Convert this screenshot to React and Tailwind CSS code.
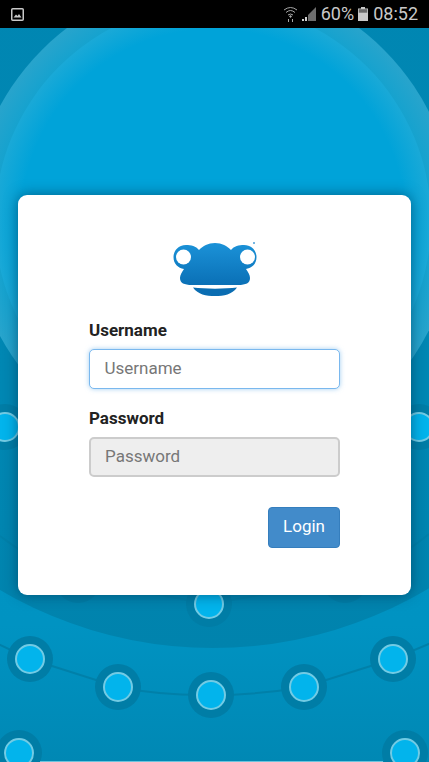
import React from 'react';

const NODES = [
  [5, 427], [419, 427], [78, 580], [345, 580], [209, 604],
  [30, 659], [118, 687], [211, 695], [304, 687], [393, 659],
  [19, 753], [405, 753],
];

function Background() {
  return (
    <svg className="absolute inset-0" width="429" height="762" viewBox="0 0 429 762">
      <defs>
        <linearGradient id="base" x1="0" y1="0" x2="0" y2="1">
          <stop offset="0" stopColor="#0098c8" />
          <stop offset="0.82" stopColor="#0093c2" />
          <stop offset="1" stopColor="#0088b4" />
        </linearGradient>
        <linearGradient id="dark" x1="0" y1="0" x2="0" y2="1">
          <stop offset="0" stopColor="#0086b2" />
          <stop offset="0.7" stopColor="#0087b3" />
          <stop offset="1" stopColor="#0083ad" />
        </linearGradient>
        <radialGradient id="ringOuter" gradientUnits="userSpaceOnUse" cx="213" cy="221" r="242">
          <stop offset="0.88" stopColor="#12a2cf" />
          <stop offset="1" stopColor="#28a4cc" />
        </radialGradient>
        <radialGradient id="ringInner" gradientUnits="userSpaceOnUse" cx="213" cy="221" r="218">
          <stop offset="0.88" stopColor="#00a3d9" />
          <stop offset="1" stopColor="#1aa9d7" />
        </radialGradient>
      </defs>
      <rect width="429" height="762" fill="url(#base)" />
      <circle cx="213" cy="228" r="420" fill="url(#dark)" />
      <circle cx="213" cy="221" r="242" fill="url(#ringOuter)" />
      <circle cx="213" cy="221" r="218" fill="url(#ringInner)" />
      <g fill="none" stroke="#0080a9" strokeWidth="2">
        <path d="M-2 644 L30 659 L118 687 Q165 696 211 695 Q258 695 304 687 L393 659 L431 643" />
        <path d="M0 536 Q40 566 78 580 L209 604 L345 580 Q390 566 429 534" />
      </g>
      {NODES.map(([x, y]) => (
        <g key={`${x}-${y}`}>
          <circle cx={x} cy={y} r="23" fill="#007da6" />
          <circle cx={x} cy={y} r="14" fill="#02b4ec" stroke="#72cbe4" strokeWidth="2" />
        </g>
      ))}
      <rect x="40" y="761" width="343" height="1" fill="#6cc4dd" />
    </svg>
  );
}

function StatusBar() {
  return (
    <div className="relative h-7 shrink-0 bg-black flex items-center pl-[11px] pr-[11px] text-[#c9c9c9]">
      <svg width="13" height="13" viewBox="0 0 13 13">
        <rect x="0.75" y="0.75" width="11.5" height="11.5" rx="1" fill="none" stroke="#c9c9c9" strokeWidth="1.5" />
        <path d="M2.5 9.5 L5 6.5 L6.5 8 L8 6 L10.5 9.5 Z" fill="#c9c9c9" />
      </svg>
      <div className="ml-auto flex items-center">
        <svg width="15" height="17" viewBox="0 0 15 17" fill="none" stroke="#a8a8a8" strokeWidth="1">
          <path d="M1 4 Q7.5 -1 14 4" />
          <path d="M3 6.5 Q7.5 2.5 12 6.5" />
          <path d="M5 9 Q7.5 7 10 9" />
          <circle cx="7.5" cy="10.5" r="0.8" fill="#a8a8a8" />
          <path d="M5.5 13 V16 M9.5 13 V16" />
        </svg>
        <svg className="ml-[3px]" width="16" height="16" viewBox="0 0 16 16">
          <path d="M15 1 V15 H7 V9 Z" fill="#6d6d6d" />
          <rect x="1" y="13" width="2" height="2" fill="#d0d0d0" />
          <rect x="4" y="11" width="2" height="4" fill="#d0d0d0" />
        </svg>
        <span className="ml-[4px] text-[18px] leading-none">60%</span>
        <svg className="ml-[4px]" width="10" height="14" viewBox="0 0 10 14">
          <rect x="3" y="0" width="4" height="2" fill="#c9c9c9" />
          <rect x="0" y="1.5" width="10" height="12.5" fill="#c9c9c9" />
          <rect x="0.8" y="2.2" width="8.4" height="3.5" fill="#6a6a6a" />
        </svg>
        <span className="ml-[5px] text-[18px] leading-none">08:52</span>
      </div>
    </div>
  );
}

function FrogLogo() {
  return (
    <svg width="90" height="60" viewBox="0 0 90 60">
      <defs>
        <linearGradient id="frog" x1="0" y1="0" x2="0" y2="1">
          <stop offset="0" stopColor="#1b92d8" />
          <stop offset="1" stopColor="#0a70b6" />
        </linearGradient>
      </defs>
      <path
        d="M45 5 C38 5 33 8 29 12 C26 8 21 7 16 7 C8 7 3.5 13 3.5 19 C3.5 26 8 30 14 31 C12 34 10 37 10 40 C10 45 14 47 22 47 L68 47 C76 47 80 45 80 40 C80 37 78 34 76 31 C82 30 86.5 26 86.5 19 C86.5 13 82 7 74 7 C69 7 64 8 61 12 C57 8 52 5 45 5 Z"
        fill="url(#frog)"
      />
      <circle cx="13.5" cy="19" r="7.5" fill="#fff" />
      <circle cx="77.5" cy="19" r="7.5" fill="#fff" />
      <path d="M23 49.5 C35 51 55 51 67 49.5 C62 56.5 54 58 45 58 C36 58 28 56.5 23 49.5 Z" fill="#0a6db2" />
      <circle cx="84" cy="5" r="1" fill="#4a9fd8" />
    </svg>
  );
}

export default function App() {
  return (
    <div className="relative w-[429px] h-[762px] overflow-hidden flex flex-col font-['Roboto',sans-serif]">
      <Background />
      <StatusBar />
      <div className="relative px-[18px] pt-[167px]">
        <div className="h-[400px] bg-white rounded-[9px] shadow-[0_0_14px_rgba(0,50,80,0.6)] px-[71px] pt-[43px]">
          <div className="flex justify-center">
            <FrogLogo />
          </div>
          <label className="block mt-[22px] text-[17px] leading-[20px] font-bold text-[#222]">Username</label>
          <input
            placeholder="Username"
            className="block mt-[9px] w-full h-[40px] px-[14.5px] pb-[2px] bg-white rounded-[5px] border-[1.5px] border-[#7ab8ee] shadow-[0_0_5px_rgba(102,175,233,0.6)] text-[17px] outline-none placeholder:text-[#777]"
          />
          <label className="block mt-[19px] text-[17px] leading-[20px] font-bold text-[#222]">Password</label>
          <input
            placeholder="Password"
            className="block mt-[9px] w-full h-[40px] px-[14px] pb-[2px] bg-[#eeeeee] rounded-[5px] border-2 border-[#cccccc] text-[17px] outline-none placeholder:text-[#777]"
          />
          <div className="flex justify-end mt-[30px]">
            <button className="w-[72px] h-[41px] pb-[2px] bg-[#428bca] border border-[#357ebd] rounded-[4px] text-white text-[17px]">Login</button>
          </div>
        </div>
      </div>
    </div>
  );
}
